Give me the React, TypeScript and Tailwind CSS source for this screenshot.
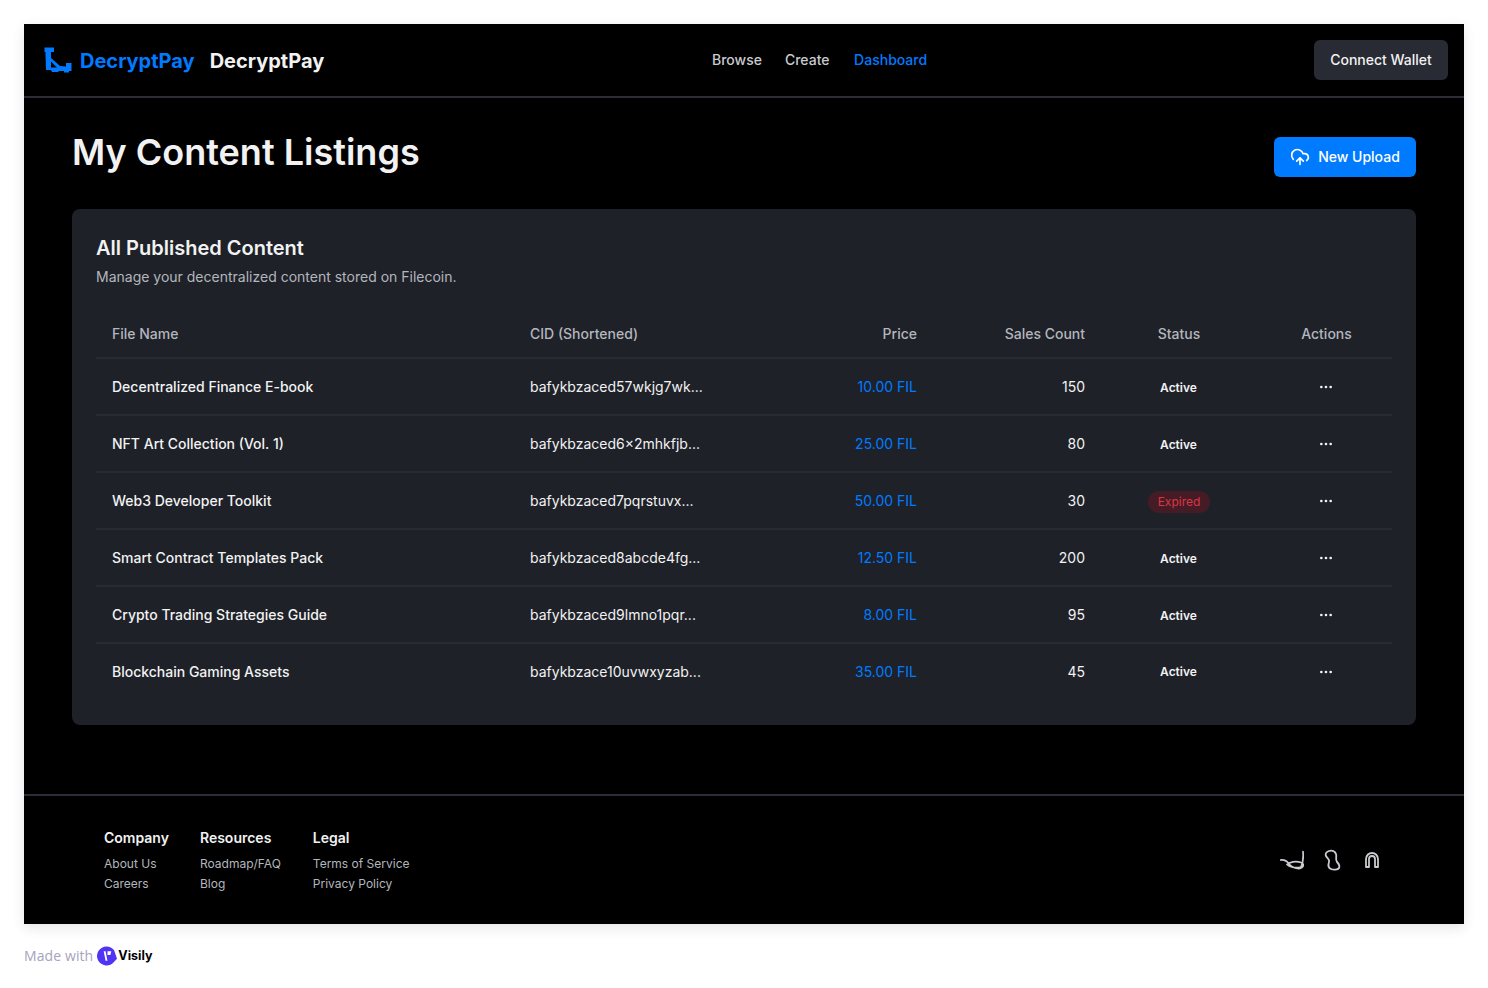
import React from "react";
import { CloudUpload, Ellipsis } from "lucide-react";

const rows = [
  ["Decentralized Finance E-book", "bafykbzaced57wkjg7wk...", "10.00 FIL", "150", "Active"],
  ["NFT Art Collection (Vol. 1)", "bafykbzaced6×2mhkfjb...", "25.00 FIL", "80", "Active"],
  ["Web3 Developer Toolkit", "bafykbzaced7pqrstuvx...", "50.00 FIL", "30", "Expired"],
  ["Smart Contract Templates Pack", "bafykbzaced8abcde4fg...", "12.50 FIL", "200", "Active"],
  ["Crypto Trading Strategies Guide", "bafykbzaced9lmno1pqr...", "8.00 FIL", "95", "Active"],
  ["Blockchain Gaming Assets", "bafykbzace10uvwxyzab...", "35.00 FIL", "45", "Active"],
];

const footer = [
  ["Company", "About Us", "Careers"],
  ["Resources", "Roadmap/FAQ", "Blog"],
  ["Legal", "Terms of Service", "Privacy Policy"],
];

export default function App() {
  return (
    <div className="min-h-[988px] bg-white font-['Inter',sans-serif]">
      <div className="px-6 pt-6">
        <div className="bg-black shadow-[0_4px_12px_rgba(0,0,0,0.1)]">
          <header className="flex h-[74px] items-center border-b-2 border-[#2b2e38] pl-5 pr-4">
            <div className="flex w-[668px] items-center">
              <svg width="28" height="28" viewBox="0 0 28 28" className="mr-2 text-[#007bff]">
                <path
                  fillRule="evenodd"
                  fill="currentColor"
                  d="M0.5 1.5L10 1.5L10 6L7 6L7 12L16 20L22 20.5L22 17L27.5 17L27.5 25L25 25L25 26.5L20 26.5L20 25L15 25L14 26L8 26L7 24L2 24L1.5 9L1.5 6L0.5 6ZM7 15.5L7 21.5L13 21.5Z"
                />
              </svg>
              <span className="pt-[2px] text-[20px] font-bold leading-7 text-[#007bff]">DecryptPay</span>
              <span className="ml-[15px] pt-[2px] text-[20px] font-bold leading-7 text-[#f2f2f2]">DecryptPay</span>
            </div>
            <nav className="flex items-center text-sm font-medium">
              <span className="text-[#c9cbd1]">Browse</span>
              <span className="ml-[23px] text-[#c9cbd1]">Create</span>
              <span className="ml-[24.6px] text-[#007bff]">Dashboard</span>
            </nav>
            <div className="flex flex-1 justify-end">
              <button className="h-10 w-[134px] rounded-md bg-[#282b33] text-sm font-medium text-[#f2f2f2]">Connect Wallet</button>
            </div>
          </header>

          <main className="px-12 pb-[69px] pt-8">
            <div className="mb-8 flex items-start justify-between">
              <h1 className="mt-[2px] text-[36px] font-semibold leading-10 text-[#f2f2f2]">My Content Listings</h1>
              <button className="mt-[7px] flex h-10 w-[142px] items-center justify-center gap-2 rounded-md bg-[#007bff] text-sm font-medium text-white">
                <CloudUpload size={20} strokeWidth={2} />
                New Upload
              </button>
            </div>

            <section className="rounded-lg bg-[#1e2128] px-6 pb-[25px] pt-[25px]">
              <h2 className="text-xl font-semibold leading-7 text-[#f2f2f2]">All Published Content</h2>
              <p className="mt-[5px] text-sm leading-5 text-[#b3b6bd]">Manage your decentralized content stored on Filecoin.</p>
              <table className="mt-[23px] w-full table-fixed text-sm">
                <thead>
                  <tr className="h-[48px] border-b-2 border-[#282b33] text-[#b3b6bd]">
                    <th className="w-[418px] px-4 text-left font-medium">File Name</th>
                    <th className="w-[230px] px-4 text-left font-medium">CID (Shortened)</th>
                    <th className="w-[189px] px-4 text-right font-medium">Price</th>
                    <th className="w-[168px] px-4 text-right font-medium">Sales Count</th>
                    <th className="w-[156px] px-4 text-center font-medium">Status</th>
                    <th className="pl-5 pr-4 text-center font-medium">Actions</th>
                  </tr>
                </thead>
                <tbody>
                  {rows.map((r, i) => (
                    <tr key={r[0]} className={i < rows.length - 1 ? "h-[57px] border-b-2 border-[#282b33]" : "h-[57px]"}>
                      <td className="px-4 font-medium text-[#f2f2f2]">{r[0]}</td>
                      <td className="px-4 text-[#f2f2f2]">{r[1]}</td>
                      <td className="px-4 text-right text-[#007bff]">{r[2]}</td>
                      <td className="px-4 text-right text-[#f2f2f2]">{r[3]}</td>
                      <td className="px-4 text-center">
                        {r[4] === "Active" ? (
                          <span className={i === 5 ? "mr-px inline-block -translate-y-px text-xs font-semibold text-[#f2f2f2]" : "mr-px text-xs font-semibold text-[#f2f2f2]"}>Active</span>
                        ) : (
                          <span className="inline-block translate-y-px rounded-full bg-[#451c26] px-[10px] py-[3px] text-xs text-[#dc3545]">Expired</span>
                        )}
                      </td>
                      <td className="pl-5 pr-[17px]">
                        <div className="flex justify-center text-[#f2f2f2]">
                          <Ellipsis size={16} />
                        </div>
                      </td>
                    </tr>
                  ))}
                </tbody>
              </table>
            </section>
          </main>

          <footer className="flex h-[130px] items-center justify-between border-t-2 border-[#2b2e38] pl-20 pr-[80px]">
            <div className="mt-[2px] flex gap-[31px]">
              {footer.map((c, i) => (
                <div key={c[0]} className={i === 2 ? "ml-px" : ""}>
                  <div className="mb-[6px] text-sm font-semibold leading-5 text-[#f2f2f2]">{c[0]}</div>
                  <div className="text-xs leading-5 text-[#b3b6bd]">{c[1]}</div>
                  <div className="text-xs leading-5 text-[#b3b6bd]">{c[2]}</div>
                </div>
              ))}
            </div>
            <div className="flex items-center gap-4 text-[#c9cbd1]">
              <svg width="24" height="24" viewBox="0 0 24 24" fill="none" stroke="currentColor" strokeWidth="1.7" strokeLinecap="round" strokeLinejoin="round">
                <path d="M0.5 12C4 11.5 7 13 9 16C11 19 16 21 20 20.5C24 19 24.5 16 21 14.5C16 12.5 9 14 7 16.5C9 19 15 20.5 21 19C23 15 23.5 9 23 3.5" />
              </svg>
              <svg width="24" height="24" viewBox="0 0 24 24" fill="none" stroke="currentColor" strokeWidth="1.8" strokeLinecap="round" strokeLinejoin="round">
                <path d="M9 3C12 2 15 3 16 6C17 9 15 11 17 14C19 16 20 18 19 20C18 22 13 22 11 21C8.5 20 8 17 9 14C10 11 7 10 6 8C5 6 6 4 9 3Z" />
              </svg>
              <svg width="24" height="24" viewBox="0 0 24 24" fill="none" stroke="currentColor" strokeWidth="1.8" strokeLinejoin="round">
                <path d="M6 19V11a6 6 0 0 1 12 0v8h-3v-8a3 3 0 0 0-6 0v8z" />
              </svg>
            </div>
          </footer>
        </div>
      </div>
      <div className="mt-[22px] flex items-center pl-6 text-sm">
        <span className="font-['Open_Sans',sans-serif] tracking-[0.1px] text-[#a5a3bd]">Made with</span>
        <svg width="20" height="20" viewBox="0 0 21 20" className="ml-[4px]">
          <path d="M10 0a10 10 0 0 1 8 4l3 9-3 3a10 10 0 1 1-8-16z" fill="#4f34f5" />
          <path d="M7 5l2 0 2 10h-2zM11 5h4l-1 4h-3z" fill="#fff" />
        </svg>
        <span className="ml-px text-[12.5px] font-bold text-black">Visily</span>
      </div>
    </div>
  );
}
